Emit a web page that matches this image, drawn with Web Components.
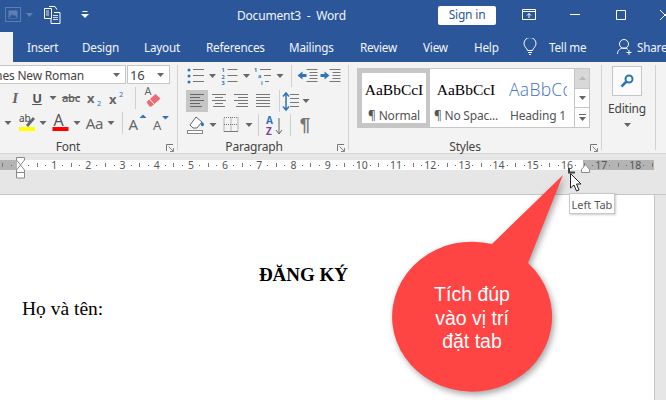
<!DOCTYPE html>
<html lang="vi">
<head>
<meta charset="utf-8">
<title>Document3 - Word</title>
<style>
  html, body { margin: 0; padding: 0; }
  body { width: 666px; height: 400px; overflow: hidden; position: relative; display: flex; flex-direction: column; background: #e6e6e6; font-family: "Noto Sans", "Open Sans", sans-serif; letter-spacing: -.2px; }
</style>
</head>
<body>
<w-titlebar></w-titlebar>
<w-tabs></w-tabs>
<w-ribbon>
  <rb-group w="178" label="Font" label-w="136" launcher>
    <rb-row>
      <rb-combo w="126" clip>Times New Roman</rb-combo>
      <rb-combo w="43" style="margin-left:1px;font-size:13px">16</rb-combo>
    </rb-row>
    <rb-row>
      <rb-tool w="4"></rb-tool>
      <rb-tool w="22" style="font:italic bold 15px 'Liberation Serif',serif;color:#666">I</rb-tool>
      <rb-tool w="22" style="font-weight:700;font-size:13px;text-decoration:underline">U</rb-tool>
      <rb-tool w="10" icon="caret"></rb-tool>
      <rb-tool w="26" style="font-size:11px;font-weight:600;text-decoration:line-through;color:#666">abc</rb-tool>
      <rb-tool w="22" icon="sub"></rb-tool>
      <rb-tool w="22" icon="sup"></rb-tool>
      <rb-tool w="7"></rb-tool>
      <rb-tool w="1" icon="vsep"></rb-tool>
      <rb-tool w="33" icon="eraser"></rb-tool>
    </rb-row>
    <rb-row>
      <rb-tool w="16" icon="caret"></rb-tool>
      <rb-tool w="22" icon="highlight"></rb-tool>
      <rb-tool w="10" icon="caret"></rb-tool>
      <rb-tool w="25" icon="fontcolor"></rb-tool>
      <rb-tool w="8" icon="caret"></rb-tool>
      <rb-tool w="27" style="font-size:15px;color:#666">Aa</rb-tool>
      <rb-tool w="6" icon="caret"></rb-tool>
      <rb-tool w="8"></rb-tool>
      <rb-tool w="1" icon="vsep"></rb-tool>
      <rb-tool w="27" icon="grow"></rb-tool>
      <rb-tool w="18" icon="shrink"></rb-tool>
    </rb-row>
  </rb-group>

  <rb-group w="171" label="Paragraph" label-w="152" launcher>
    <rb-row>
      <rb-tool w="8"></rb-tool>
      <rb-tool w="20" icon="bullets"></rb-tool>
      <rb-tool w="13" icon="caret"></rb-tool>
      <rb-tool w="21" icon="numbers"></rb-tool>
      <rb-tool w="13" icon="caret"></rb-tool>
      <rb-tool w="20" icon="multi"></rb-tool>
      <rb-tool w="14" icon="caret"></rb-tool>
      <rb-tool w="4"></rb-tool>
      <rb-tool w="1" icon="vsep"></rb-tool>
      <rb-tool w="4"></rb-tool>
      <rb-tool w="23" icon="outdent"></rb-tool>
      <rb-tool w="23" icon="indent"></rb-tool>
    </rb-row>
    <rb-row>
      <rb-tool w="8"></rb-tool>
      <rb-tool w="22" icon="aleft" active></rb-tool>
      <rb-tool w="22" icon="acenter"></rb-tool>
      <rb-tool w="22" icon="aright"></rb-tool>
      <rb-tool w="22" icon="ajust"></rb-tool>
      <rb-tool w="5"></rb-tool>
      <rb-tool w="1" icon="vsep"></rb-tool>
      <rb-tool w="22" icon="spacing"></rb-tool>
      <rb-tool w="8" icon="caret"></rb-tool>
    </rb-row>
    <rb-row>
      <rb-tool w="8"></rb-tool>
      <rb-tool w="20" icon="shade"></rb-tool>
      <rb-tool w="14" icon="caret"></rb-tool>
      <rb-tool w="23" icon="borders"></rb-tool>
      <rb-tool w="12" icon="caret"></rb-tool>
      <rb-tool w="3"></rb-tool>
      <rb-tool w="1" icon="vsep"></rb-tool>
      <rb-tool w="28" icon="sort"></rb-tool>
      <rb-tool w="3"></rb-tool>
      <rb-tool w="1" icon="vsep"></rb-tool>
      <rb-tool w="28" style="font:700 19px 'Liberation Sans',sans-serif;color:#777">¶</rb-tool>
    </rb-row>
  </rb-group>

  <rb-group w="253" label="Styles" label-w="232" launcher>
    <rb-gallery></rb-gallery>
  </rb-group>

  <rb-group w="54" editing>
    <rb-editing></rb-editing>
  </rb-group>
</w-ribbon>
<w-ruler></w-ruler>
<w-doc>
  <h1>ĐĂNG KÝ</h1>
  <p>Họ và tên:</p>
</w-doc>
<w-callout>Tích đúp<br>vào vị trí<br>đặt tab</w-callout>
<w-tip>Left Tab</w-tip>

<script>
const ICONS = {
  caret: '<path d="M-3.500 -2h7L0 2z" fill="#666"/>',
  vsep: '<path d="M0 -11V11" stroke="#d0d0d0"/>',
  sub: '<text x="-8" y="5" font-size="13" font-weight="700" fill="#666">x</text><text x="2" y="8" font-size="7.500" fill="#2e75b6">2</text>',
  sup: '<text x="-8" y="6" font-size="13" font-weight="700" fill="#666">x</text><text x="2" y="-1" font-size="7.500" fill="#2e75b6">2</text>',
  eraser: '<text x="-8" y="-3" font-size="11" fill="#666">A</text><path d="M-6 4l9-8 5 4.500-9 8H-3z" fill="#ea6b72"/><path d="M-3 1l4.500 5" stroke="#fff"/>',
  highlight: '<text x="-8" y="-1" font-size="10" fill="#444">ab</text><path d="M-1 2l7-8 2 2-7 8z" fill="#666"/><rect x="-8" y="4" width="16" height="4" fill="#ffff00"/>',
  fontcolor: '<text x="-7" y="3" font-size="16" fill="#555">A</text><rect x="-8" y="4" width="16" height="4" fill="#ff0000"/>',
  grow: '<text x="-8" y="7" font-size="15" fill="#666">A</text><path d="M3 -5l3.500 -3.500L10 -5z" fill="#2e75b6"/>',
  shrink: '<text x="-6" y="7" font-size="13" fill="#666">A</text><path d="M3 -7h7L6.500 -3.500z" fill="#2e75b6"/>',
  bullets: '<g fill="#2e75b6"><circle cx="-7" cy="-6" r="1.500"/><circle cx="-7" cy="0" r="1.500"/><circle cx="-7" cy="6" r="1.500"/></g><path d="M-3 -6.500H8M-3 -.5H8M-3 5.500H8" stroke="#777"/>',
  numbers: '<g fill="#2e75b6" font-size="5.500" font-weight="700"><text x="-8" y="-4">1</text><text x="-8" y="2.500">2</text><text x="-8" y="9">3</text></g><path d="M-2 -6.500H8M-2 -.5H8M-2 5.500H8" stroke="#777"/>',
  multi: '<g fill="#2e75b6" font-size="5.500" font-weight="700"><text x="-9" y="-4">1</text><text x="-5" y="2">a</text><text x="-2" y="9">i</text></g><path d="M-3 -6.500H8M1 -.5H8M2 5.500H6" stroke="#777"/>',
  outdent: '<path d="M-1 -6.500H10M2 -3.500H10M2 -.5H10M2 2.500H10M-1 5.500H10" stroke="#777"/><path d="M-10 -.5l5 -4v2.500h4v3h-4v2.500z" fill="#2e75b6"/>',
  indent: '<path d="M-1 -6.500H10M2 -3.500H10M2 -.5H10M2 2.500H10M-1 5.500H10" stroke="#777"/><path d="M-1 -.5l-5 -4v2.500h-4v3h4v2.500z" fill="#2e75b6"/>',
  aleft: '<path d="M-7 -6.500H7M-7 -3.500H3M-7 -.5H7M-7 2.500H3M-7 5.500H5" stroke="#666"/>',
  acenter: '<path d="M-7 -6.500H7M-4 -3.500H4M-7 -.5H7M-4 2.500H4M-6 5.500H6" stroke="#777"/>',
  aright: '<path d="M-7 -6.500H7M-3 -3.500H7M-7 -.5H7M-3 2.500H7M-5 5.500H7" stroke="#777"/>',
  ajust: '<path d="M-7 -6.500H7M-7 -3.500H7M-7 -.5H7M-7 2.500H7M-7 5.500H7" stroke="#777"/>',
  spacing: '<path d="M-1 -6.500H8M-1 -2.500H8M-1 1.500H8M-1 5.500H8" stroke="#777"/><path d="M-5 -7V8M-8 -4.500l3 -3.500 3 3.500M-8 5.500l3 3.500 3 -3.500" stroke="#2e75b6" stroke-width="1.500" fill="none"/>',
  shade: '<path d="M-6 0l6 -8 6 5-5 6H-3z" fill="#fff" stroke="#666"/><path d="M6 -3c2 1 3 3 1 4s-3 -2-1 -4z" fill="#2e75b6"/><rect x="-8.500" y="5.500" width="15" height="3" fill="#fff" stroke="#888"/>',
  borders: '<path d="M-7.500 -7.500H6.500V6.500H-7.500zM-.5 -7.500V6.500M-7.500 -.5H6.500" fill="none" stroke="#777" stroke-dasharray="1 1"/><path d="M-7.500 6.500H6.500" stroke="#777"/>',
  sort: '<text x="-7" y="-1.500" font-size="10" font-weight="700" fill="#2e75b6">A</text><text x="-7" y="9.500" font-size="10" font-weight="700" fill="#7b3fa0">Z</text><path d="M6 -7V8M3 5l3 4 3-4" fill="none" stroke="#666"/>'
};

const svgFor = (name, w) =>
  `<svg width="${w}" height="22" viewBox="${-w / 2} -11 ${w} 22" overflow="visible" font-family="'Noto Sans',sans-serif" letter-spacing="0">${ICONS[name] || ''}</svg>`;

class WTitlebar extends HTMLElement {
  constructor() {
    super();
    this.attachShadow({ mode: 'open' });
    this.shadowRoot.innerHTML = `
      <style>
        :host { display: flex; align-items: center; height: 30px; padding-bottom: 2px; background: #2b579a; color: #fff; font-size: 12px; flex: none; }
        .qat { display: flex; align-items: center; width: 237px; flex: none; }
        .title { width: 201px; flex: none; color: #f2f5fa; }
        button { all: unset; box-sizing: border-box; width: 58px; height: 19px; background: #fff; border-radius: 2px; color: #2b579a; text-align: center; line-height: 18px; flex: none; font-size: 12px; }
        svg { display: block; flex: none; }
      </style>
      <div class="qat">
        <svg width="17" height="16" style="margin-left:5px"><rect x=".5" y=".5" width="15" height="14" fill="none" stroke="#5a7cb0"/><rect x="3.500" y="3.500" width="9" height="8" fill="#5f7fb3"/><path d="M4 11l3-4 2 2 1-1 2 3z" fill="#2b579a"/></svg>
        <svg width="8" height="4" style="margin-left:4px"><path d="M0 0h7L3.500 4z" fill="#5f7fb3"/></svg>
        <svg width="17" height="18" style="margin-left:10px" fill="none" stroke="#fff"><path d="M.5 2.500h7v10h-7zM5 .5h6l2 3M10 6.500h6v11h-9v-5"/><path d="M9 9.500h5M9 11.500h5M9 13.500h5M2 5h3M2 7h3M2 9h3" stroke-width=".8"/></svg>
        <svg width="9" height="8" style="margin-left:20px"><path d="M1.500 0h5v1h-5zM0 3h8L4 7z" fill="#fff"/></svg>
      </div>
      <span class="title">Document3&nbsp; -&nbsp; Word</span>
      <button>Sign in</button>
      <svg width="14" height="12" style="margin-left:26px" fill="none" stroke="#fff"><path d="M.5 .5h13v10H.5zM.5 2.500h13M7 9V4.500M5 6.500l2-2 2 2"/></svg>
      <svg width="10" height="2" style="margin-left:34px"><path d="M0 .5h10" stroke="#fff"/></svg>
      <svg width="10" height="10" style="margin-left:36px" fill="none" stroke="#fff"><path d="M.5 .5h9v9h-9z"/></svg>
      <svg width="6" height="12" style="margin-left:34px" fill="none" stroke="#fff"><path d="M0 1l10 10M10 1L0 11"/></svg>
    `;
  }
}

class WTabs extends HTMLElement {
  constructor() {
    super();
    this.attachShadow({ mode: 'open' });
    const tabs = [['Insert', 55], ['Design', 62], ['Layout', 62], ['References', 83], ['Mailings', 71], ['Review', 63], ['View', 51]];
    this.shadowRoot.innerHTML = `
      <style>
        :host { display: flex; align-items: center; height: 30px; background: #2b579a; color: #f2f5fa; font-size: 11.700px; flex: none; white-space: nowrap; }
        .file { width: 13px; height: 30px; background: #f3f3f3; margin-right: 14px; flex: none; }
        span { display: block; flex: none; }
        svg { display: block; flex: none; }
      </style>
      <div class="file"></div>
      ${tabs.map(([t, w]) => `<span style="width:${w}px">${t}</span>`).join('')}
      <span style="width:49px">Help</span>
      <svg width="14" height="18" style="margin-right:12px" fill="none" stroke="#fff"><path d="M4.500 12.500C4 10 1 9 1 5.500a6 6 0 0 1 12 0C13 9 10 10 9.500 12.500zM5 14.500h4M6 16.500h2"/></svg>
      <span style="width:68px">Tell me</span>
      <svg width="16" height="18" style="margin-right:4px" fill="none" stroke="#fff"><circle cx="7" cy="6" r="4.500"/><path d="M.5 16c0-4 3-6 6.500-6 1.500 0 3 .5 4 1.500M12 12v5M9.500 14.500h5"/></svg>
      <span>Share</span>
    `;
  }
}

class WRibbon extends HTMLElement {
  constructor() {
    super();
    this.attachShadow({ mode: 'open' });
    this.shadowRoot.innerHTML = `
      <style>
        :host { display: flex; height: 85px; padding: 3px 0; background: #f3f3f3; border-bottom: 1px solid #d6d6d6; flex: none; }
      </style>
      <slot></slot>
    `;
  }
}

class RbGroup extends HTMLElement {
  constructor() {
    super();
    this.attachShadow({ mode: 'open' });
  }
  connectedCallback() {
    const w = this.getAttribute('w');
    const label = this.getAttribute('label') || '';
    const labelW = this.getAttribute('label-w') || w;
    this.shadowRoot.innerHTML = `
      <style>
        :host { display: flex; flex-direction: column; box-sizing: border-box; width: ${w}px; flex: none; border-right: 1px solid #d2d2d2; position: relative; gap: 3px; }
        .label { margin-top: auto; margin-bottom: -5px; height: 16px; line-height: 16px; width: ${labelW}px; text-align: center; font-size: 12px; color: #444; }
        .launch { position: absolute; right: 3px; bottom: -2px; }
      </style>
      <slot></slot>
      ${label ? `<div class="label">${label}</div>` : ''}
      ${this.hasAttribute('launcher') ? `<svg class="launch" width="8" height="8" fill="none" stroke="#777"><path d="M.5 7V.5H7"/><path d="M2.500 2.500L7 7M4 7.500h3.500V4" stroke-width=".9"/></svg>` : ''}
    `;
  }
}

class RbRow extends HTMLElement {
  constructor() {
    super();
    this.attachShadow({ mode: 'open' });
    this.shadowRoot.innerHTML = `
      <style>
        :host { display: flex; align-items: center; min-height: 19px; }
        :host(:not(:first-child)) { height: 22px; }
      </style>
      <slot></slot>
    `;
  }
}

class RbCombo extends HTMLElement {
  constructor() {
    super();
    this.attachShadow({ mode: 'open' });
  }
  connectedCallback() {
    const w = this.getAttribute('w');
    const clip = this.hasAttribute('clip');
    this.shadowRoot.innerHTML = `
      <style>
        :host { display: flex; align-items: center; box-sizing: border-box; width: ${w}px; height: 19px; flex: none; background: #fff; border: 1px solid #c6c6c6; ${clip ? 'border-left: 0;' : ''} font-size: 12px; color: #444; position: relative; }
        .t { flex: 1; padding: 2px 0 0 2px; line-height: 15px; white-space: nowrap; ${clip ? 'margin-left: -20px;' : ''} }
        svg { margin-right: 5px; flex: none; }
      </style>
      <div class="t"><slot></slot></div>
      <svg width="7" height="4"><path d="M0 0h7L3.500 4z" fill="#666"/></svg>
    `;
  }
}

class RbTool extends HTMLElement {
  constructor() {
    super();
    this.attachShadow({ mode: 'open' });
  }
  connectedCallback() {
    const w = +this.getAttribute('w');
    const icon = this.getAttribute('icon');
    const active = this.hasAttribute('active');
    this.shadowRoot.innerHTML = `
      <style>
        :host { display: flex; align-items: center; justify-content: center; width: ${w}px; height: 22px; flex: none; color: #555; font-size: 12px; line-height: 22px; ${active ? 'background: #c6c6c6;' : ''} }
        svg { display: block; }
      </style>
      ${icon ? svgFor(icon, w) : '<slot></slot>'}
    `;
  }
}

class RbGallery extends HTMLElement {
  constructor() {
    super();
    this.attachShadow({ mode: 'open' });
    this.shadowRoot.innerHTML = `
      <style>
        :host { display: flex; box-sizing: border-box; width: 233px; height: 60px; margin: 3px 0 0 8px; background: #fff; border: 1px solid #c6c6c6; flex: none; }
        .item { box-sizing: border-box; display: flex; flex-direction: column; align-items: center; flex: none; height: 58px; }
        .sel { width: 72px; border: 4px solid #c6c6c6; padding-top: 7px; }
        .plain { width: 72px; padding-top: 11px; }
        .last { width: 72px; padding-top: 8px; position: relative; }
        .pv { font: 15.500px/20px "Liberation Serif", serif; letter-spacing: 0; color: #000; white-space: nowrap; height: 20px; }
        .hd { font: 300 17.500px/24px "Open Sans", "Noto Sans", sans-serif; letter-spacing: .3px; color: #4472c4; width: 58px; overflow: hidden; white-space: nowrap; height: 24px; }
        .nm { margin-top: 8px; font-size: 12px; line-height: 16px; color: #555; white-space: nowrap; }
        .last .nm { margin-top: 7px; }
        .scroll { width: 14px; margin-left: auto; display: flex; flex-direction: column; flex: none; border-left: 1px solid #c6c6c6; }
        .scroll div { flex: 1; display: flex; align-items: center; justify-content: center; border-bottom: 1px solid #c6c6c6; }
        .scroll div:last-child { border-bottom: 0; }
        .scroll .up { background: #d8d8d8; }
      </style>
      <div class="item sel"><div class="pv">AaBbCcI</div><div class="nm">¶ Normal</div></div>
      <div class="item plain"><div class="pv">AaBbCcI</div><div class="nm">¶ No Spac...</div></div>
      <div class="item last"><div class="hd">AaBbCc</div><div class="nm">Heading 1</div></div>
      <div class="scroll">
        <div class="up"><svg width="7" height="4"><path d="M0 4h7L3.500 0z" fill="#b8b8b8"/></svg></div>
        <div><svg width="7" height="4"><path d="M0 0h7L3.500 4z" fill="#666"/></svg></div>
        <div><svg width="7" height="7"><path d="M0 .5h7" stroke="#666"/><path d="M0 3h7L3.500 7z" fill="#666"/></svg></div>
      </div>
    `;
  }
}

class RbEditing extends HTMLElement {
  constructor() {
    super();
    this.attachShadow({ mode: 'open' });
    this.shadowRoot.innerHTML = `
      <style>
        :host { display: flex; flex-direction: column; align-items: center; width: 50px; font-size: 12px; color: #444; padding-top: 1px; box-sizing: border-box; }
        .b { box-sizing: border-box; width: 30px; height: 30px; border: 1px solid #c6c6c6; background: #fbfbfb; display: flex; align-items: center; justify-content: center; }
        .t { margin-top: 5px; line-height: 16px; }
        svg.c { margin-top: 6px; }
      </style>
      <div class="b"><svg width="14" height="14" fill="none" stroke="#2e75b6"><circle cx="9" cy="5" r="3.500" stroke-width="2"/><path d="M6.500 7.500L1.500 12.500" stroke-width="2.500"/></svg></div>
      <div class="t">Editing</div>
      <svg class="c" width="7" height="4"><path d="M0 0h7L3.500 4z" fill="#666"/></svg>
    `;
  }
}

class WRuler extends HTMLElement {
  constructor() {
    super();
    this.attachShadow({ mode: 'open' });
    let cells = '';
    for (let i = -2; i <= 74; i++) {
      let c = '<i></i>';
      if (i % 4 === 0 && i > 0) c = i / 4;
      else if (i === 0) c = '';
      else if (Math.abs(i % 4) === 2) c = '<b></b>';
      cells += `<span>${c}</span>`;
    }
    this.shadowRoot.innerHTML = `
      <style>
        :host { display: block; height: 40px; background: #e6e6e6; flex: none; position: relative; border-bottom: 1px solid #c6c6c6; letter-spacing: 0; }
        .strip { position: relative; top: 6px; height: 10px; width: 654px; background: linear-gradient(90deg, #b4b4b4 0 17px, #fff 17px 583px, #b4b4b4 583px); }
        .ticks { display: flex; align-items: center; height: 10px; margin-left: -1.380px; font-size: 10.500px; color: #555; line-height: 10px; }
        span { flex: none; width: 8.550px; display: flex; align-items: center; justify-content: center; white-space: nowrap; }
        i { display: block; width: 1px; height: 1px; background: #666; }
        b { display: block; width: 1px; height: 4px; background: #777; }
        .mk { position: absolute; display: block; }
      </style>
      <div class="strip"><div class="ticks">${cells}</div></div>
      <svg class="mk" style="left:16px;top:3px" width="10" height="22" fill="#fff" stroke="#8a8a8a"><path d="M.5 .5h8V3L4.500 8 .5 3zM4.500 8l4 5v2.500h-8V13zM.5 15.500h8v5.500h-8z"/></svg>
      <svg class="mk" style="left:581px;top:10px" width="10" height="10" fill="#fff" stroke="#8a8a8a"><path d="M4.500 .5l4 5v3h-8v-3z"/></svg>
      <svg class="mk" style="left:568px;top:14px" width="8" height="6" fill="none" stroke="#444" stroke-width="2"><path d="M1 0v4.500h6"/></svg>
      <svg class="mk" style="left:570px;top:19px" width="14" height="20"><path d="M.5 .5v14.500l3.500-3 2.500 6 2.500-1-2.500-6h4.500z" fill="#fff" stroke="#222"/></svg>
    `;
  }
}

class WDoc extends HTMLElement {
  constructor() {
    super();
    this.attachShadow({ mode: 'open' });
    this.shadowRoot.innerHTML = `
      <style>
        :host { display: block; flex: 1; width: 655px; background: #fff; border-right: 1px solid #c6c6c6; color: #000; font-family: "Liberation Serif", serif; letter-spacing: 0; padding: 69px 0 0 22px; box-sizing: border-box; }
        ::slotted(h1) { font-size: 19px; line-height: 22px; font-weight: 700; margin: 0 0 11px; padding-right: 69px; text-align: center; }
        ::slotted(p) { font-size: 19.500px; line-height: 24px; margin: 0; }
      </style>
      <slot></slot>
    `;
  }
}

class WCallout extends HTMLElement {
  constructor() {
    super();
    this.attachShadow({ mode: 'open' });
    this.shadowRoot.innerHTML = `
      <style>
        :host { position: absolute; left: 385px; top: 170px; width: 190px; height: 230px; font: 19.500px/23.500px "Liberation Sans", sans-serif; letter-spacing: 0; color: #fff; text-align: center; }
        svg { position: absolute; left: 0; top: 0; overflow: visible; filter: drop-shadow(2px 3px 3px rgba(0,0,0,.35)); }
        .t { position: absolute; left: 7px; width: 160px; top: 113px; }
      </style>
      <svg width="190" height="230"><path d="M178 5L143 93A80 75 0 1 1 107 74z" fill="#ff4444"/></svg>
      <div class="t"><slot></slot></div>
    `;
  }
}

class WTip extends HTMLElement {
  constructor() {
    super();
    this.attachShadow({ mode: 'open' });
    this.shadowRoot.innerHTML = `
      <style>
        :host { position: absolute; left: 569px; top: 193px; box-sizing: border-box; width: 46px; height: 21px; background: #fff; border: 1px solid #c8c8c8; box-shadow: 1px 1px 2px rgba(0,0,0,.2); font-size: 11px; line-height: 21px; letter-spacing: 0; color: #555; text-align: center; white-space: nowrap; }
      </style>
      <slot></slot>
    `;
  }
}

customElements.define('w-titlebar', WTitlebar);
customElements.define('w-tabs', WTabs);
customElements.define('w-ribbon', WRibbon);
customElements.define('rb-group', RbGroup);
customElements.define('rb-row', RbRow);
customElements.define('rb-combo', RbCombo);
customElements.define('rb-tool', RbTool);
customElements.define('rb-gallery', RbGallery);
customElements.define('rb-editing', RbEditing);
customElements.define('w-ruler', WRuler);
customElements.define('w-doc', WDoc);
customElements.define('w-callout', WCallout);
customElements.define('w-tip', WTip);
</script>
</body>
</html>
